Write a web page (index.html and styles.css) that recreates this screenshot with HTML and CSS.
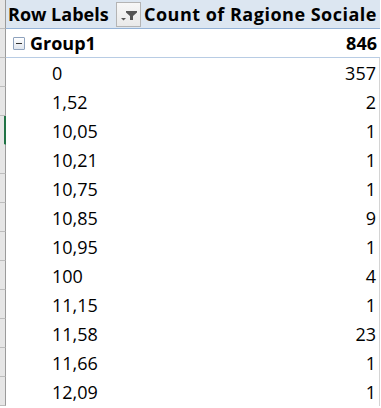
FILE: index.html
```html
<!DOCTYPE html>
<html lang="it">
<head>
  <meta charset="UTF-8" />
  <title>Pivot - Ragione Sociale</title>
  <link rel="stylesheet" href="styles.css">
</head>
<body>
  <div class="sheet">
    <div class="rowheads">
      <div class="rh"></div>
      <div class="rh"></div>
      <div class="rh"></div>
      <div class="rh"></div>
      <div class="rh selected"></div>
      <div class="rh"></div>
      <div class="rh"></div>
      <div class="rh"></div>
      <div class="rh"></div>
      <div class="rh"></div>
      <div class="rh"></div>
      <div class="rh"></div>
      <div class="rh"></div>
      <div class="rh"></div>
    </div>

    <div class="pivot">
      <div class="row head">
        <div class="label">
          <span>Row Labels</span>
          <span class="filter-btn">
            <svg width="25" height="25" viewBox="0 0 25 25">
              <polygon points="10,9 21,9 21,10.5 17,14 17,18 14,18 14,14 10,10.5" fill="#555" />
              <polygon points="5,16 10,16 7.5,18.5" fill="#555" />
            </svg>
          </span>
        </div>
        <div class="value">Count of Ragione Sociale</div>
      </div>

      <div class="row group">
        <div class="label">
          <span class="toggle"></span>
          <span>Group1</span>
        </div>
        <div class="value">846</div>
      </div>

      <div class="row item"><div class="label">0</div><div class="value">357</div></div>
      <div class="row item"><div class="label">1,52</div><div class="value">2</div></div>
      <div class="row item"><div class="label">10,05</div><div class="value">1</div></div>
      <div class="row item"><div class="label">10,21</div><div class="value">1</div></div>
      <div class="row item"><div class="label">10,75</div><div class="value">1</div></div>
      <div class="row item"><div class="label">10,85</div><div class="value">9</div></div>
      <div class="row item"><div class="label">10,95</div><div class="value">1</div></div>
      <div class="row item"><div class="label">100</div><div class="value">4</div></div>
      <div class="row item"><div class="label">11,15</div><div class="value">1</div></div>
      <div class="row item"><div class="label">11,58</div><div class="value">23</div></div>
      <div class="row item"><div class="label">11,66</div><div class="value">1</div></div>
      <div class="row item"><div class="label">12,09</div><div class="value">1</div></div>
    </div>
  </div>
</body>
</html>
```

FILE: styles.css
```css
body {
  margin: 0;
  font-family: 'Open Sans', sans-serif;
  font-size: 18px;
  color: #000;
  background: #fff;
}
.sheet {
  display: flex;
  height: 408px;
  overflow: hidden;
}
.rowheads {
  display: flex;
  flex-direction: column;
  width: 6px;
  flex-shrink: 0;
}
.rh {
  height: 29px;
  box-sizing: border-box;
  background: #e6e6e6;
  border-bottom: 1px solid #bdbdbd;
  border-right: 1px solid #9b9b9b;
  flex-shrink: 0;
}
.rh.selected {
  border-right: 2px solid #217346;
  border-bottom-color: #e6e6e6;
}
.pivot {
  width: 374px;
  flex-shrink: 0;
}
.row {
  display: flex;
  height: 29px;
  box-sizing: border-box;
  align-items: center;
}
.label {
  width: 137px;
  height: 100%;
  display: flex;
  align-items: center;
  box-sizing: border-box;
}
.value {
  width: 237px;
  height: 100%;
  display: flex;
  align-items: center;
  justify-content: flex-end;
  padding-right: 3px;
  box-sizing: border-box;
}
.head {
  background: #dce6f1;
  border-bottom: 1px solid #95b3d7;
  font-weight: 700;
}
.head .label {
  padding-left: 2px;
  justify-content: space-between;
  padding-right: 2px;
}
.head .value {
  white-space: nowrap;
  letter-spacing: 0.5px;
}
.filter-btn {
  width: 25px;
  height: 25px;
  box-sizing: border-box;
  border: 1px solid #b4b4b4;
  background: linear-gradient(#f7f7f7, #e9e9e9);
  display: flex;
}
.filter-btn svg {
  margin: -1px;
}
.group {
  border-bottom: 1px solid #b8cce4;
  font-weight: 700;
}
.group .label {
  padding-left: 7px;
}
.toggle {
  width: 12px;
  height: 13px;
  box-sizing: border-box;
  border: 1px solid #8ea2bd;
  border-radius: 1px;
  background: linear-gradient(#ffffff, #dfe5ee);
  margin-right: 5px;
  position: relative;
}
.toggle::after {
  content: "";
  position: absolute;
  left: 2px;
  right: 2px;
  top: 5px;
  height: 1px;
  background: #333;
}
.item .label {
  padding-left: 46px;
}
.item .value {
  border-right: 1px solid #d4d4d4;
}
```
